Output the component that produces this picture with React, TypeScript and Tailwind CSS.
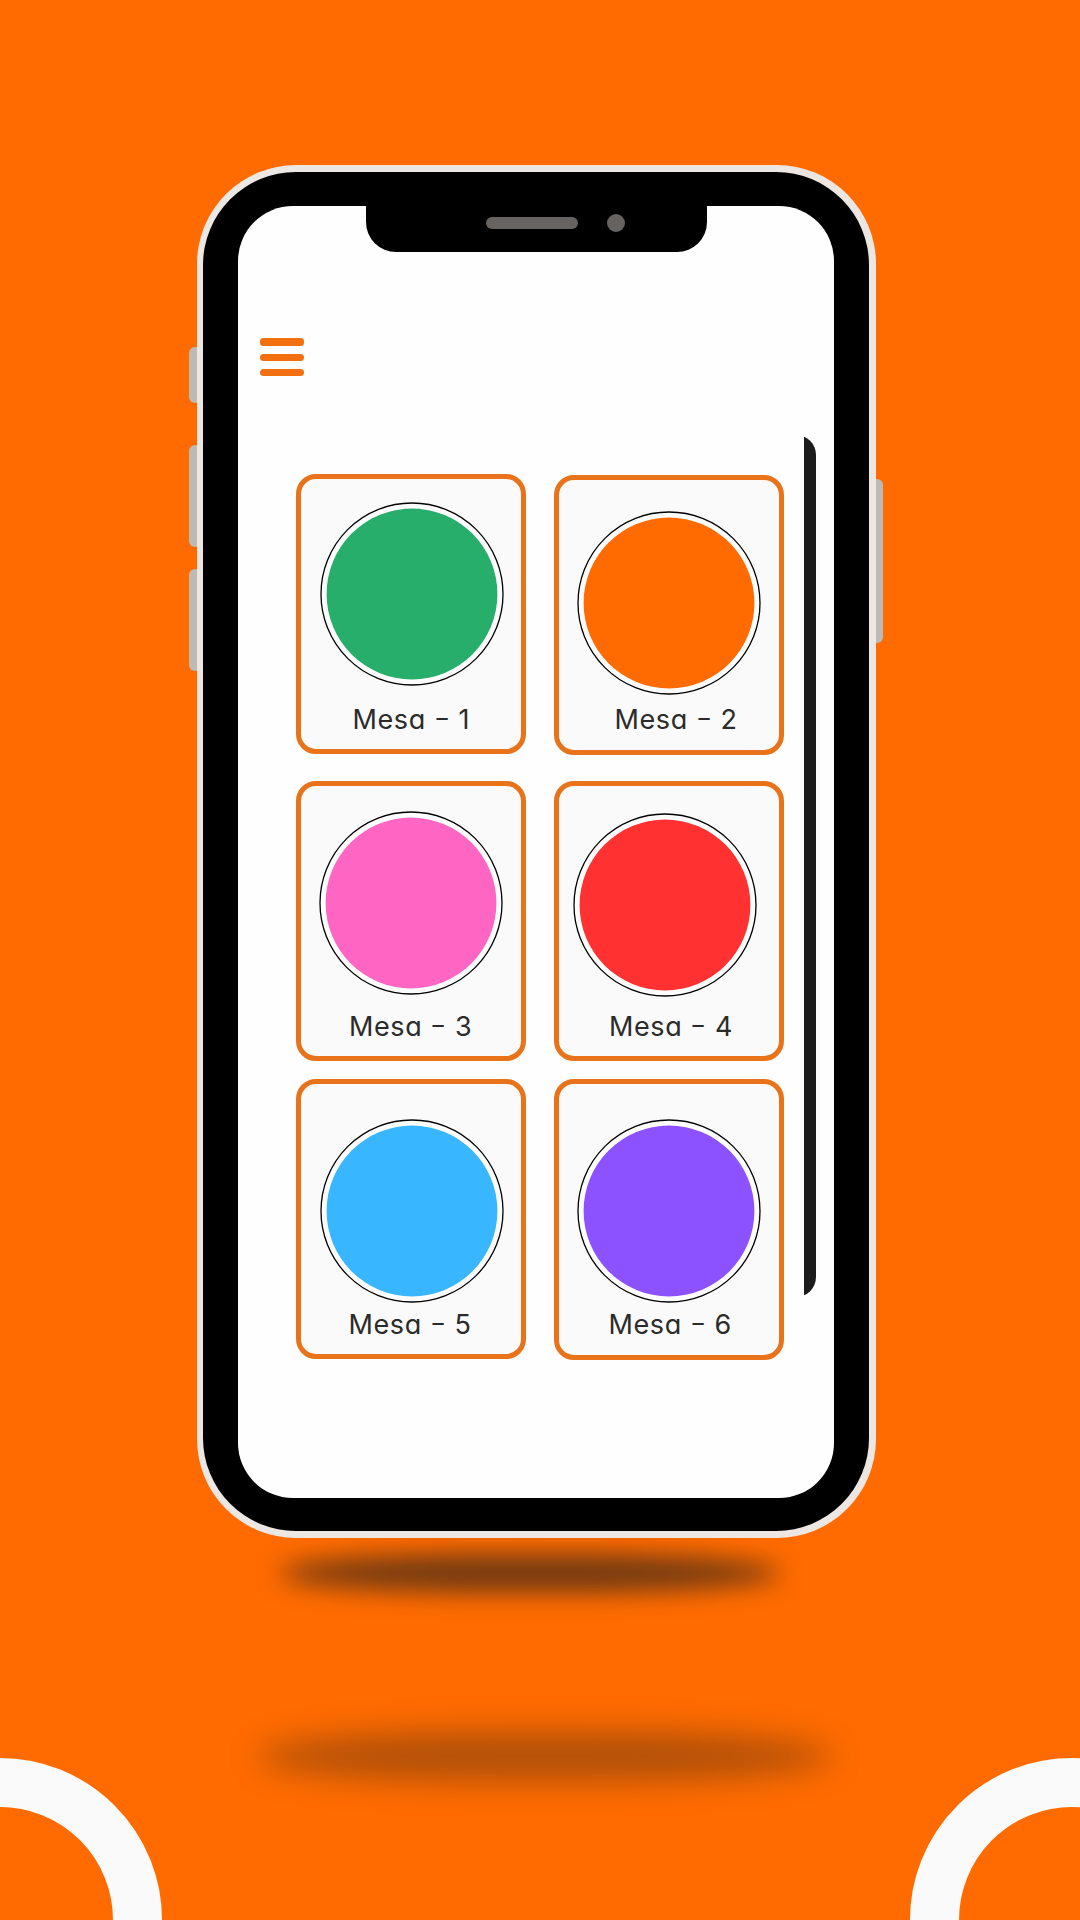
import React from "react";

type Table = {
  id: number;
  card: string;
  ring: string;
  dot: string;
  label: string;
};

const leftColumn: Table[] = [
  { id: 1, card: "mt-[37px] h-[280.5px]", ring: "ml-[18.7px] mt-[22.7px]", dot: "fill-[#27ae6b]", label: "left-[51.5px] bottom-[11px]" },
  { id: 3, card: "mt-[26.3px] h-[280px]", ring: "ml-[18.2px] mt-[25.4px]", dot: "fill-[#ff66c4]", label: "left-[48px] bottom-[11px]" },
  { id: 5, card: "mt-[18.2px] h-[280px]", ring: "ml-[18.7px] mt-[35.5px]", dot: "fill-[#38b6ff]", label: "left-[47.5px] bottom-[11px]" },
];

const rightColumn: Table[] = [
  { id: 2, card: "mt-[37.7px] h-[280.3px]", ring: "ml-[18.2px] mt-[31px]", dot: "fill-[#ff6b00]", label: "left-[55.5px] bottom-[12px]" },
  { id: 4, card: "mt-[26px] h-[280.2px]", ring: "ml-[14.2px] mt-[27.2px]", dot: "fill-[#ff3131]", label: "left-[50px] bottom-[11px]" },
  { id: 6, card: "mt-[18px] h-[280.8px]", ring: "ml-[18.2px] mt-[35.3px]", dot: "fill-[#8c52ff]", label: "left-[49.5px] bottom-[12px]" },
];

function TableCard({ id, card, ring, dot, label }: Table) {
  return (
    <div className={`relative flex w-[230px] shrink-0 flex-col rounded-[20px] border-[5px] border-[#e8731a] bg-[#fafafa] ${card}`}>
      <svg viewBox="0 0 184 184" className={`size-[184px] shrink-0 ${ring}`} aria-hidden="true">
        <circle cx="92" cy="92" r="91" className="fill-[#fdfdfd] stroke-black" strokeWidth="1.3" />
        <circle cx="92" cy="92" r="85.4" className={dot} />
      </svg>
      <span
        className={`absolute whitespace-pre text-[27px] leading-[36px] tracking-[0.6px] text-[#2b2b2b] [font-family:Inter,sans-serif] [font-feature-settings:'cv11'] [word-spacing:1.6px] ${label}`}
      >
        Mesa <span className="inline-block -translate-y-px scale-x-[1.3] scale-y-90">-</span> {id}
      </span>
    </div>
  );
}

export default function App() {
  return (
    <div className="relative h-[1920px] w-[1080px] overflow-hidden bg-[#ff6b00] pt-[165px]">
      {/* floor shadows */}
      <div className="absolute left-[280px] top-[1554px] h-[38px] w-[500px] rounded-[42%/50%] bg-[#01131f]/57 blur-[13px]" />
      <div className="absolute left-[258px] top-[1731px] h-[51px] w-[574px] rounded-[42%/50%] bg-[#01131f]/30 blur-[16px]" />

      {/* corner rings */}
      <div className="absolute left-[-162px] top-[1757.7px] size-[324px] rounded-full border-[49px] border-[#fafafa]" />
      <div className="absolute left-[910px] top-[1757.7px] size-[324px] rounded-full border-[49px] border-[#fafafa]" />

      {/* side buttons */}
      <div className="absolute left-[189px] top-[347px] h-[56px] w-[12px] rounded-[6px] bg-[#bdb9b6]" />
      <div className="absolute left-[189px] top-[445px] h-[102px] w-[12px] rounded-[6px] bg-[#bdb9b6]" />
      <div className="absolute left-[189px] top-[569px] h-[102px] w-[12px] rounded-[6px] bg-[#bdb9b6]" />
      <div className="absolute left-[871px] top-[479px] h-[164px] w-[12px] rounded-[6px] bg-[#bdb9b6]" />

      {/* phone */}
      <div className="relative ml-[197px] h-[1373px] w-[679px] rounded-[99px] bg-[#ece7e3] py-[7px] pl-[6px] pr-[7px]">
        <div className="h-full rounded-[93px] bg-black pb-[33px] pl-[35px] pr-[35px] pt-[34px]">
          <div className="h-full overflow-hidden rounded-[55px] bg-[#fefefe]">
            <div className="ml-[128px] flex h-[46.3px] w-[340.7px] rounded-b-[30px] bg-black">
              <div className="ml-[120px] mt-[11px] h-[12px] w-[92px] rounded-full bg-[#666360]" />
              <div className="ml-[29px] mt-[8px] size-[18px] rounded-full bg-[#666360]" />
            </div>

            <div className="ml-[22px] mt-[86.2px] flex w-[44px] flex-col gap-[8.3px]">
              <div className="h-[7.1px] rounded-[3.5px] bg-[#f2700f]" />
              <div className="h-[7.1px] rounded-[3.5px] bg-[#f2700f]" />
              <div className="h-[7.1px] rounded-[3.5px] bg-[#f2700f]" />
            </div>

            <div className="mt-[60.6px] flex pl-[58px]">
              <div className="flex w-[230px] flex-col">
                {leftColumn.map((t) => (
                  <TableCard key={t.id} {...t} />
                ))}
              </div>
              <div className="ml-[28px] flex w-[230px] flex-col">
                {rightColumn.map((t) => (
                  <TableCard key={t.id} {...t} />
                ))}
              </div>
              {/* scrollbar: only the right slice of a rounded panel shows */}
              <div className="ml-[20px] flex h-[859px] w-[12px] justify-end overflow-hidden">
                <div className="-mt-[1.5px] h-[862px] w-[50px] shrink-0 rounded-[20px] bg-[#1c1c1c]" />
              </div>
            </div>
          </div>
        </div>
      </div>
    </div>
  );
}
